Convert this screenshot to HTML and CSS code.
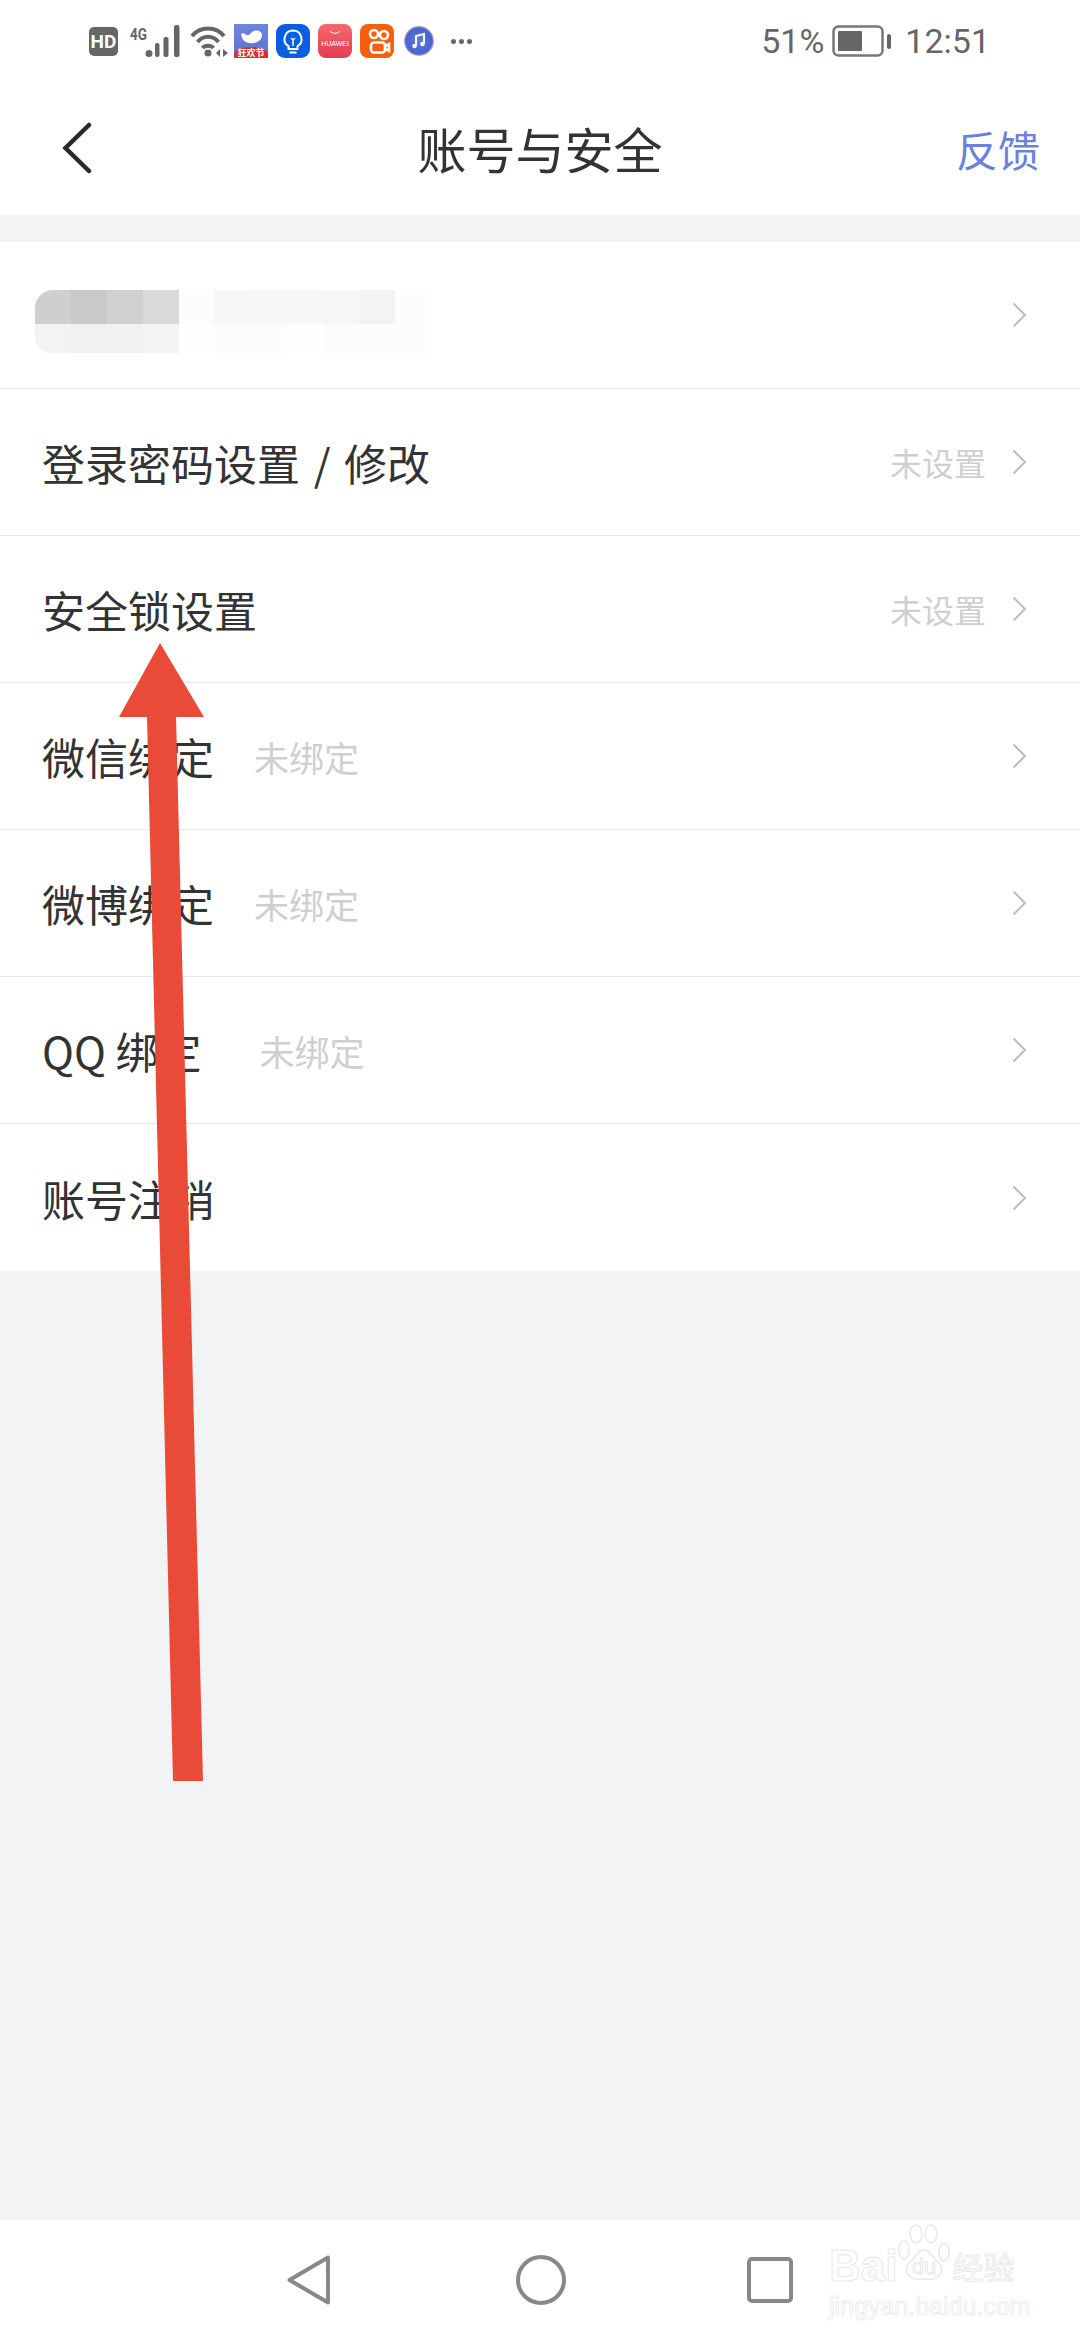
FILE: index.html
```html
<!DOCTYPE html>
<html lang="zh">
<head>
    <meta charset="UTF-8">
    <title>账号与安全</title>
    <link rel="stylesheet" href="styles.css">
</head>
<body>
    <div class="status">
        <div class="status_left">
            <span class="hd">HD</span>
            <svg class="sig" width="50" height="32" viewBox="0 0 50 32"><text x="0" y="15" class="sig_text" textLength="17" lengthAdjust="spacingAndGlyphs">4G</text><g fill="#666"><circle cx="19" cy="28.500" r="3.500"/><rect x="25" y="18" width="4.500" height="14" rx="2"/><rect x="33.500" y="12" width="5" height="20" rx="2"/><rect x="44" y="0" width="5.500" height="32" rx="2"/></g></svg>
            <svg class="wifi" width="38" height="32" viewBox="0 0 38 32"><g fill="none" stroke="#666" stroke-width="4"><path d="M2 11 C 10 1 26 1 34 11"/><path d="M7.500 17 C 13 10 23 10 28.500 17"/><path d="M12.500 23 C 15 20 21 20 23.500 23"/></g><circle cx="18" cy="28" r="3.500" fill="#666"/><path d="M30 24v8l-4-4zM33 24v8l5-4z" fill="#666"/></svg>
            <svg class="app" width="34" height="34" viewBox="0 0 34 34"><defs><linearGradient id="sky" x1="0" y1="0" x2="0" y2="1"><stop offset="0" stop-color="#6f86e0"/><stop offset="1" stop-color="#5a70cf"/></linearGradient></defs><rect width="34" height="34" fill="url(#sky)"/><path d="M7 10c1 8 7 10 13 9 5-1 8-4 8-8 0-5-8-6-11-2-2 3-5 3-7 0z" fill="#fff"/><path d="M0 32c0-6 6-9 17-9s17 3 17 9v2H0z" fill="#d8302b"/><text x="17" y="32" class="app_cn" text-anchor="middle">狂欢节</text></svg>
            <svg class="app" width="34" height="34" viewBox="0 0 34 34"><rect width="34" height="34" rx="9" fill="#0a5fe0"/><path d="M17 6.500a8.500 8.500 0 0 0-4.500 15.700V25h9v-2.800A8.500 8.500 0 0 0 17 6.500zM13.500 28.500h7" fill="none" stroke="#fff" stroke-width="2"/><path d="M15 14l2 2 2-2M17 16v6" fill="none" stroke="#fff" stroke-width="1.500"/></svg>
            <svg class="app" width="34" height="34" viewBox="0 0 34 34"><defs><linearGradient id="hw" x1="0" y1="0" x2="0" y2="1"><stop offset="0" stop-color="#f56a6a"/><stop offset="1" stop-color="#e23c54"/></linearGradient></defs><rect width="34" height="34" rx="8" fill="url(#hw)"/><path d="M12 7c2 3 8 3 10 0" fill="none" stroke="#fff" stroke-width="1"/><text x="17" y="22" class="app_hw" text-anchor="middle">HUAWEI</text></svg>
            <svg class="app" width="34" height="34" viewBox="0 0 34 34"><rect width="34" height="34" rx="8" fill="#f6600c"/><g fill="none" stroke="#fff" stroke-width="2.600"><circle cx="14" cy="10" r="4"/><circle cx="24" cy="11" r="4"/><rect x="11" y="18.500" width="14" height="10" rx="3"/><path d="M25 22l4-2v7l-4-2"/></g></svg>
            <svg class="app_music" width="30" height="30" viewBox="0 0 30 30"><defs><radialGradient id="music"><stop offset="0" stop-color="#5f7fe0"/><stop offset="0.850" stop-color="#4a62c8"/><stop offset="1" stop-color="#b9a8ef"/></radialGradient></defs><circle cx="15" cy="15" r="15" fill="url(#music)"/><path d="M12 20V10l8-2v10" fill="none" stroke="#fff" stroke-width="2"/><circle cx="10.500" cy="20" r="2.200" fill="#fff"/><circle cx="18.500" cy="18" r="2.200" fill="#fff"/></svg>
            <div class="dots"><i></i><i></i><i></i></div>
        </div>
        <div class="status_right">
            <span>51%</span>
            <svg class="battery" width="59" height="32" viewBox="0 0 59 32"><rect x="1.500" y="1.500" width="49" height="29" rx="5" fill="none" stroke="#777" stroke-width="2.500"/><rect x="6" y="6" width="24" height="20" rx="1" fill="#666"/><rect x="55" y="9" width="4" height="15" rx="2" fill="#666"/></svg>
            <span class="time">12:51</span>
        </div>
    </div>

    <div class="nav">
        <svg class="back" width="30" height="52" viewBox="0 0 30 52"><path d="M27 3 L3.500 26 L27 49" fill="none" stroke="#2a2a2a" stroke-width="4.500" stroke-linecap="round"/></svg>
        <div class="nav_title">账号与安全</div>
        <div class="nav_link">反馈</div>
    </div>

    <div class="list">
        <div class="row">
            <div class="blur">
                <div class="blur_top"><i class="b1"></i><i class="b2"></i><i class="b3"></i><i class="b4"></i><i class="b5"></i><i class="b6"></i><i class="b7"></i><i class="b7"></i><i class="b6"></i><i class="b8"></i><i class="b5"></i></div>
                <div class="blur_bot"><i class="c1"></i><i class="c2"></i><i class="c2"></i><i class="c3"></i><i class="c4"></i><i class="c5"></i><i class="c5"></i><i class="c4"></i><i class="c5"></i><i class="c5"></i><i class="c5"></i></div>
            </div>
            <svg class="chev" width="15" height="26" viewBox="0 0 15 26"><path d="M1.500 1.500 L13 13 L1.500 24.500"/></svg>
        </div>
        <div class="row">
            <span class="label label_slash">登录密码设置 / 修改</span>
            <span class="value right">未设置</span>
            <svg class="chev" width="15" height="26" viewBox="0 0 15 26"><path d="M1.500 1.500 L13 13 L1.500 24.500"/></svg>
        </div>
        <div class="row">
            <span class="label">安全锁设置</span>
            <span class="value right">未设置</span>
            <svg class="chev" width="15" height="26" viewBox="0 0 15 26"><path d="M1.500 1.500 L13 13 L1.500 24.500"/></svg>
        </div>
        <div class="row">
            <span class="label">微信绑定</span>
            <span class="value">未绑定</span>
            <svg class="chev" width="15" height="26" viewBox="0 0 15 26"><path d="M1.500 1.500 L13 13 L1.500 24.500"/></svg>
        </div>
        <div class="row">
            <span class="label">微博绑定</span>
            <span class="value">未绑定</span>
            <svg class="chev" width="15" height="26" viewBox="0 0 15 26"><path d="M1.500 1.500 L13 13 L1.500 24.500"/></svg>
        </div>
        <div class="row">
            <span class="label">QQ 绑定</span>
            <span class="value value_qq">未绑定</span>
            <svg class="chev" width="15" height="26" viewBox="0 0 15 26"><path d="M1.500 1.500 L13 13 L1.500 24.500"/></svg>
        </div>
        <div class="row">
            <span class="label">账号注销</span>
            <svg class="chev" width="15" height="26" viewBox="0 0 15 26"><path d="M1.500 1.500 L13 13 L1.500 24.500"/></svg>
        </div>
    </div>

    <div class="fill"></div>

    <div class="bottom">
        <svg width="44" height="50" viewBox="0 0 44 50"><path d="M41 2.500 V47.500 L2.500 25 Z" fill="none" stroke="#888" stroke-width="4" stroke-linejoin="round"/></svg>
        <svg class="home" width="50" height="50" viewBox="0 0 50 50"><circle cx="25" cy="25" r="23" fill="none" stroke="#888" stroke-width="4"/></svg>
        <svg class="recent" width="46" height="46" viewBox="0 0 46 46"><rect x="2" y="2" width="42" height="42" rx="3" fill="none" stroke="#888" stroke-width="4"/></svg>
    </div>

    <svg class="arrow" width="1080" height="2340" viewBox="0 0 1080 2340"><path d="M160 643 L204 717 L176 717 L203 1781 L173 1781 L147 717 L119 717 Z" fill="#ea4a38"/></svg>

    <div class="mark">
        <div class="mark_top"><span class="mark_bai">Bai</span><svg class="paw" width="56" height="62" viewBox="0 0 56 62"><g fill="none" stroke="#e8e8e8" stroke-width="1.500"><ellipse cx="8" cy="26" rx="5" ry="9"/><ellipse cx="20" cy="10" rx="6" ry="9"/><ellipse cx="35" cy="10" rx="6" ry="9"/><ellipse cx="48" cy="28" rx="5" ry="9"/><path d="M28 26c-7 0-8 8-14 12-8 6-3 20 14 17 17 3 22-11 14-17-6-4-7-12-14-12z"/></g><text x="28" y="50" class="paw_text" text-anchor="middle">du</text></svg><span class="mark_cn">经验</span></div>
        <div class="mark_url">jingyan.baidu.com</div>
    </div>
</body>
</html>
```

FILE: styles.css
```css
* {
    box-sizing: border-box;
}
html, body {
    margin: 0;
    height: 2340px;
    overflow: hidden;
}
body {
    position: relative;
    display: flex;
    flex-direction: column;
    background: #f2f3f5;
    font-family: "Noto Sans CJK SC", "Noto Sans", sans-serif;
    color: #333;
}
.status {
    height: 72px;
    padding: 10px 90px 0 89px;
    display: flex;
    justify-content: space-between;
    align-items: center;
    background: #fff;
}
.status_left {
    display: flex;
    align-items: center;
}
.hd {
    width: 29px;
    height: 29px;
    border-radius: 5px;
    background: #666;
    color: #fff;
    font: bold 19px/29px "Roboto", sans-serif;
    text-align: center;
}
.sig {
    margin-left: 12px;
    overflow: visible;
}
.sig_text {
    font: bold 17px/17px "Roboto", sans-serif;
    fill: #666;
}
.wifi {
    margin-left: 10px;
}
.app {
    margin-left: 8px;
}
.wifi + .app {
    margin-left: 6px;
}
.app_cn {
    font: bold 9px "Noto Sans CJK SC", sans-serif;
    fill: #fff;
}
.app_hw {
    font: 7px "Liberation Sans", sans-serif;
    fill: #fff;
}
.app_music {
    margin-left: 10px;
}
.dots {
    display: flex;
    gap: 3px;
    margin-left: 17px;
}
.dots i {
    width: 5px;
    height: 5px;
    border-radius: 50%;
    background: #666;
}
.status_right {
    display: flex;
    align-items: center;
    font: 34px "Roboto", sans-serif;
    color: #666;
}
.battery {
    margin-left: 8px;
}
.time {
    margin-left: 14px;
}
.nav {
    height: 143px;
    padding: 9px 40px 0 62px;
    display: flex;
    align-items: center;
    justify-content: space-between;
    position: relative;
    background: #fff;
}
.nav_title {
    position: absolute;
    left: 0;
    right: 0;
    text-align: center;
    font-size: 49px;
    line-height: 60px;
}
.nav_link {
    font-size: 42px;
    color: #6b82dc;
}
.list {
    margin-top: 27px;
    background: #fff;
}
.row {
    height: 147px;
    padding: 0 53px 0 42px;
    display: flex;
    align-items: center;
    border-bottom: 1px solid #e8e8e8;
}
.row:last-child {
    border-bottom: none;
}
.label {
    font-size: 43px;
    color: #333;
}
.label_slash {
    word-spacing: 4px;
}
.value {
    margin-left: 40px;
    font-size: 35px;
    color: #cfcfcf;
}
.value_qq {
    margin-left: 58px;
}
.value.right {
    margin-left: auto;
    margin-right: 26px;
    font-size: 32px;
}
.chev {
    margin-left: auto;
    fill: none;
    stroke: #bdbdbd;
    stroke-width: 2;
}
.value.right + .chev {
    margin-left: 0;
}
.blur {
    margin-left: -7px;
    margin-top: 12px;
}
.blur_top, .blur_bot {
    display: flex;
}
.blur_top {
    height: 34px;
}
.blur_bot {
    height: 29px;
}
.blur i {
    width: 36px;
    height: 100%;
}
.b1 { background: #cfcfcf; border-top-left-radius: 18px; }
.b2 { background: #c9c9c9; }
.b3 { background: #d0d0d0; }
.b4 { background: #dadada; }
.b5 { background: #fcfcfc; }
.b6 { background: #f6f6f6; }
.b7 { background: #f7f7f7; }
.b8 { background: #f3f3f3; }
.c1 { background: #f3f3f3; border-bottom-left-radius: 16px; }
.c2 { background: #f1f1f1; }
.c3 { background: #f3f3f3; }
.c4 { background: #fefefe; }
.c5 { background: #fcfcfc; }
.fill {
    flex: 1;
}
.bottom {
    height: 120px;
    padding-left: 287px;
    display: flex;
    align-items: center;
    background: #fff;
}
.home {
    margin-left: 185px;
}
.recent {
    margin-left: 181px;
}
.arrow {
    position: absolute;
    left: 0;
    top: 0;
}
.mark {
    position: absolute;
    left: 829px;
    top: 2224px;
    width: 200px;
    color: #fff;
    -webkit-text-stroke: 1px #e8e8e8;
}
.mark_top {
    display: flex;
    align-items: flex-end;
    height: 62px;
}
.mark_bai {
    font: bold 44px/40px "Liberation Sans", sans-serif;
}
.paw {
    flex: none;
    margin-left: -1px;
}
.paw_text {
    font: 22px "Liberation Sans", sans-serif;
    fill: #fff;
    stroke: #e8e8e8;
    stroke-width: 1;
}
.mark_cn {
    font-size: 31px;
    line-height: 40px;
    white-space: nowrap;
}
.mark_url {
    margin-top: 6px;
    font: 25px/28px "Liberation Sans", sans-serif;
    white-space: nowrap;
    -webkit-text-stroke: 0.6px #e4e4e4;
}
```
